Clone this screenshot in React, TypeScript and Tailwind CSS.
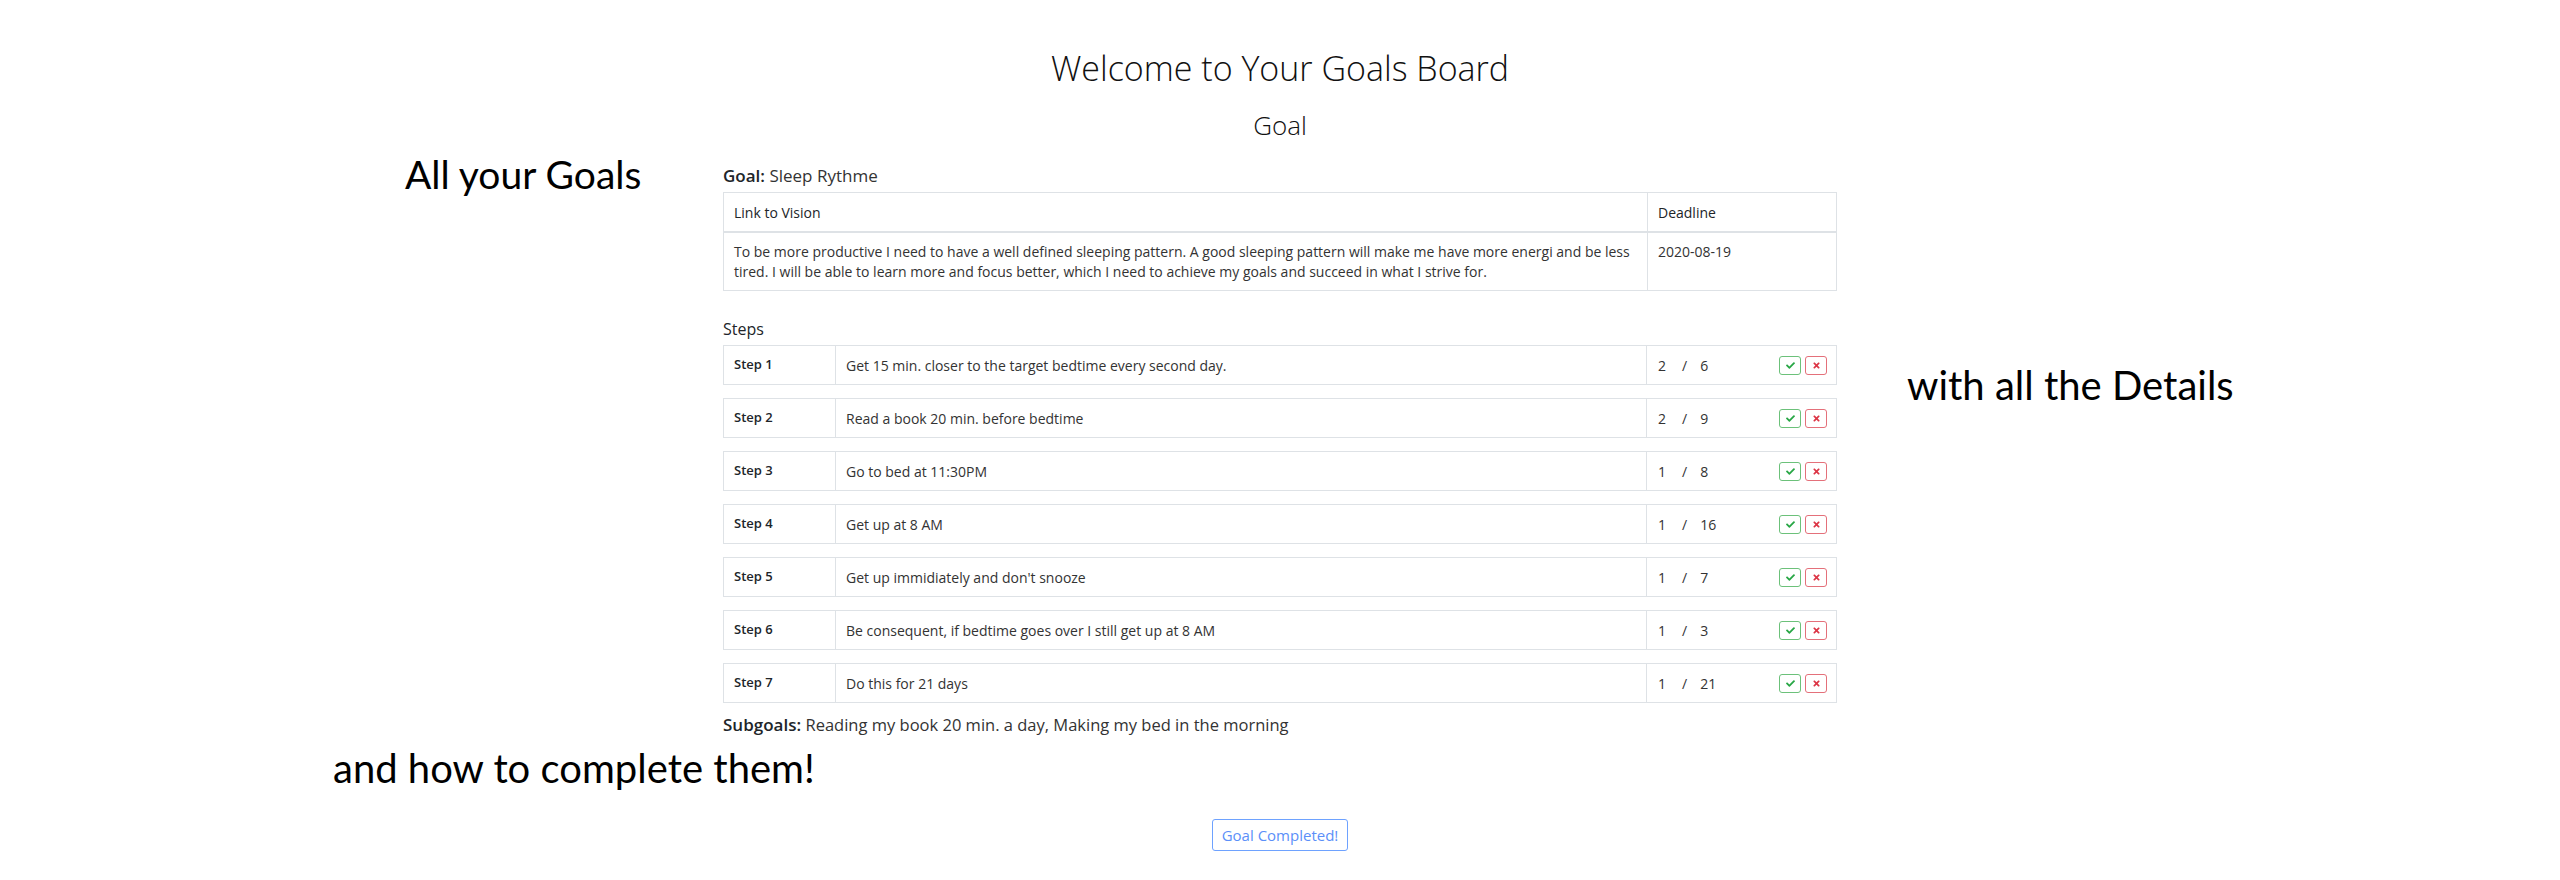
import { FaCheck, FaTimes } from "react-icons/fa";

const steps: [string, string, number, number][] = [
  ["Step 1", "Get 15 min. closer to the target bedtime every second day.", 2, 6],
  ["Step 2", "Read a book 20 min. before bedtime", 2, 9],
  ["Step 3", "Go to bed at 11:30PM", 1, 8],
  ["Step 4", "Get up at 8 AM", 1, 16],
  ["Step 5", "Get up immidiately and don't snooze", 1, 7],
  ["Step 6", "Be consequent, if bedtime goes over I still get up at 8 AM", 1, 3],
  ["Step 7", "Do this for 21 days", 1, 21],
];

export default function App() {
  return (
    <div className="relative w-full h-[880px] bg-white text-[#212529] font-['Open_Sans',sans-serif] overflow-hidden">
      <div className="absolute left-[405px] top-[148px] text-[39px] leading-[52px] text-black font-['Lato',sans-serif]">
        All your Goals
      </div>
      <div className="absolute left-[1907px] top-[359px] text-[40px] leading-[52px] text-black font-['Lato',sans-serif]">
        with all the Details
      </div>
      <div className="absolute left-[333px] top-[742px] text-[40px] leading-[52px] text-black font-['Lato',sans-serif]">
        and how to complete them!
      </div>

      <div className="flex flex-col items-center pt-[48px]">
        <h1 className="text-[34px] leading-[41px] font-light text-[#111]">Welcome to Your Goals Board</h1>
        <h2 className="mt-[21px] text-[26px] leading-[30px] font-light text-[#111]">Goal</h2>

        <div className="w-[1114px] mt-[24px]">
          <div className="text-[17px] leading-[24px]">
            <span className="font-semibold">Goal:</span> <span className="font-normal text-[#333]">Sleep Rythme</span>
          </div>

          <div className="mt-[4px] border border-[#dee2e6]">
            <div className="flex border-b-2 border-[#dee2e6] text-[14px]">
              <div className="w-[924px] px-[10px] h-[38px] flex items-center font-medium border-r border-[#dee2e6]">
                Link to Vision
              </div>
              <div className="flex-1 px-[10px] h-[38px] flex items-center font-medium">Deadline</div>
            </div>
            <div className="flex text-[14px]">
              <div className="w-[924px] px-[10px] pt-[9px] pb-[8px] leading-[20px] border-r border-[#dee2e6] text-[#333]">
                To be more productive I need to have a well defined sleeping pattern. A good sleeping pattern will make me have more energi and be less
                <br />
                tired. I will be able to learn more and focus better, which I need to achieve my goals and succeed in what I strive for.
              </div>
              <div className="flex-1 px-[10px] pt-[9px] leading-[20px] text-[#333]">2020-08-19</div>
            </div>
          </div>

          <div className="mt-[27px] text-[16px] leading-[22px]">Steps</div>

          <div className="mt-[5px] flex flex-col gap-[13px]">
            {steps.map(([label, desc, done, total]) => (
              <div key={label} className="flex h-[40px] border border-[#dee2e6] text-[14px]">
                <div className="w-[112px] px-[10px] flex items-center text-[13px] font-semibold border-r border-[#dee2e6]">{label}</div>
                <div className="w-[811px] px-[10px] flex items-center text-[#333] border-r border-[#dee2e6]">{desc}</div>
                <div className="flex-1 pl-[11px] pr-[9px] flex items-center justify-between text-[#333]">
                  <div className="flex items-center">
                    <span>{done}</span>
                    <span className="ml-[16px]">/</span>
                    <span className="ml-[13px]">{total}</span>
                  </div>
                  <div className="flex gap-[4px]">
                    <button className="w-[22px] h-[19px] flex items-center justify-center border border-[#6cc17a] rounded-[3px] text-[#28a745]">
                      <FaCheck className="w-[9px] h-[9px]" />
                    </button>
                    <button className="w-[22px] h-[19px] flex items-center justify-center border border-[#e4707a] rounded-[3px] text-[#dc3545]">
                      <FaTimes className="w-[9px] h-[9px]" />
                    </button>
                  </div>
                </div>
              </div>
            ))}
          </div>

          <div className="mt-[10px] text-[17px] leading-[24px]">
            <span className="font-semibold">Subgoals:</span>{" "}
            <span className="font-normal text-[16.5px] text-[#333]">Reading my book 20 min. a day, Making my bed in the morning</span>
          </div>
        </div>

        <button className="mt-[82px] h-[32px] px-[9px] border border-[#6ea2ff] rounded-[3px] text-[#5b8ff9] text-[15px]">
          Goal Completed!
        </button>
      </div>
    </div>
  );
}
